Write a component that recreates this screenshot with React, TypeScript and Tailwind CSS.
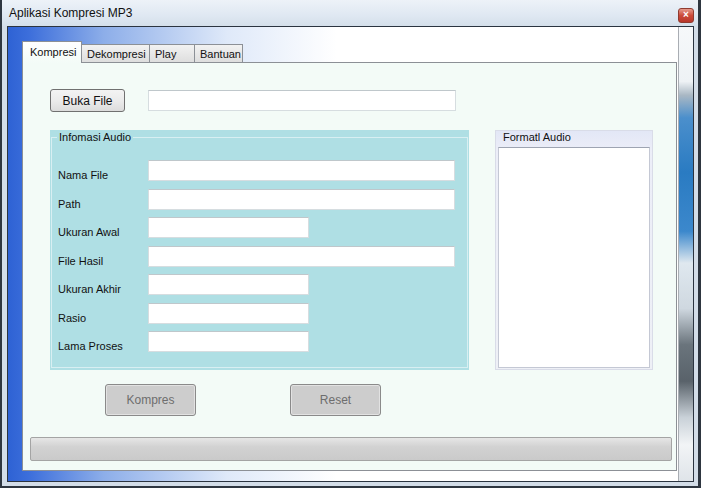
import React from 'react';

const rows = [
  { label: 'Nama File', wide: true },
  { label: 'Path', wide: true },
  { label: 'Ukuran Awal', wide: false },
  { label: 'File Hasil', wide: true },
  { label: 'Ukuran Akhir', wide: false },
  { label: 'Rasio', wide: false },
  { label: 'Lama Proses', wide: false },
];

const tabs = ['Dekompresi', 'Play', 'Bantuan'];
const tabWidths = ['w-[68px]', 'w-[45px]', 'w-[48px]'];

const TextBox = ({ wide }: { wide: boolean }) => (
  <div
    className={`h-[21px] shrink-0 ${wide ? 'w-[307px]' : 'w-[161px]'} bg-white border border-[#d6dde0] border-t-[#bfc7cb]`}
  />
);

const App = () => {
  return (
    <div className="w-[701px] h-[488px] flex flex-col bg-[#d3dde8] border-l-2 border-r-[3px] border-b-2 border-[#2e3640] font-['Liberation_Sans',Arial,sans-serif] text-[#111]">
      {/* Title bar */}
      <div className="h-[26px] flex items-center justify-between pl-[7px] pr-[4px] bg-[linear-gradient(to_bottom,#edf2f8,#dfe8f2_60%,#d4dfea)]">
        <span className="text-[12px] leading-[14px] mt-[-1px]">Aplikasi Kompresi MP3</span>
        <div className="w-[16px] h-[15px] mt-[4px] rounded-[3px] border border-[#8f3b30] bg-[linear-gradient(to_bottom,#e59a8c,#cc4a3a_50%,#b8362a)] flex items-center justify-center text-white text-[10px] font-bold leading-none">
          ×
        </div>
      </div>

      {/* Window body */}
      <div className="flex-1 flex pl-[5px] pr-[4px] pb-[4px]">
        <div className="flex-1 flex border border-[#2b3440] bg-[linear-gradient(to_right,#2e62d4,#3c6edb_3%,#8daee9_14%,#dfe9f9_32%,#ffffff_48%)]">
          {/* left glass strip */}
          <div className="w-[14px]" />

          {/* main column */}
          <div className="w-[655px] flex flex-col pt-[14px] pb-[10px]">
            {/* tab headers */}
            <div className="h-[21px] flex items-end">
              <div className="relative z-10 h-[22px] w-[60px] -mb-px bg-[linear-gradient(to_bottom,#ffffff,#f3fbf7)] border border-b-0 border-[#8c9096] text-[11px] leading-[13px] pl-[7px] pt-[4px]">
                Kompresi
              </div>
              {tabs.map((t, i) => (
                <div
                  key={t}
                  className={`h-[18px] ${tabWidths[i]} bg-[linear-gradient(to_bottom,#f2f2f2,#dedede)] border-t border-r border-[#8c9096] text-[11px] leading-[13px] pt-[3px] pl-[5px]`}
                >
                  {t}
                </div>
              ))}
            </div>

            {/* tab page */}
            <div className="flex-1 flex flex-col bg-[#f3fbf7] border border-[#8c9096]">
              {/* open file row */}
              <div className="mt-[26px] ml-[27px] flex items-center">
                <div className="w-[75px] h-[23px] rounded-[3px] border border-[#707070] bg-[linear-gradient(to_bottom,#f3f3f3,#ebebeb_50%,#dcdcdc)] flex items-center justify-center text-[12px]">
                  Buka File
                </div>
                <div className="ml-[23px] w-[308px] h-[21px] bg-white border border-[#d6dde0] border-t-[#bfc7cb]" />
              </div>

              {/* groups */}
              <div className="mt-[18px] ml-[27px] flex">
                <div className="w-[419px] h-[240px] flex flex-col bg-[#afdfe4] px-[1px] pb-[2px]">
                  <fieldset className="flex-1 border border-[#d8eff2] flex flex-col gap-[7.5px] pt-[15px]">
                    <legend className="ml-[5px] px-[2px] text-[11px] leading-[15px]">Infomasi Audio</legend>
                    {rows.map((r) => (
                      <div key={r.label} className="flex items-start h-[21px]">
                        <span className="w-[96px] shrink-0 pl-[6px] mt-[9px] text-[11px] leading-[13px]">{r.label}</span>
                        <TextBox wide={r.wide} />
                      </div>
                    ))}
                  </fieldset>
                </div>

                <div className="ml-[26px] w-[158px] h-[240px] flex flex-col border border-[#d9dce8] bg-[linear-gradient(to_bottom,#e3e7f6,#eceef8_20px,#eef0f6)]">
                  <div className="h-[16px] pl-[7px] text-[11px] leading-[12px]">Formatl Audio</div>
                  <div className="flex-1 mx-[2px] mb-[1px] bg-white border border-[#c4c8d4] border-t-[#9ea4b2]" />
                </div>
              </div>

              {/* action buttons */}
              <div className="mt-[14px] ml-[82px] flex">
                <div className="w-[91px] h-[32px] rounded-[3px] border border-[#8a8a8a] bg-[#cdcdcd] shadow-[inset_0_0_0_1px_#e2e2e2] flex items-center justify-center text-[12px] text-[#6e6e6e]">
                  Kompres
                </div>
                <div className="ml-[94px] w-[91px] h-[32px] rounded-[3px] border border-[#8a8a8a] bg-[#cdcdcd] shadow-[inset_0_0_0_1px_#e2e2e2] flex items-center justify-center text-[12px] text-[#6e6e6e]">
                  Reset
                </div>
              </div>

              {/* progress bar */}
              <div className="mt-[21px] ml-[7px] w-[642px] h-[24px] rounded-[2px] border border-[#a4a4a4] bg-[linear-gradient(to_bottom,#e6e6e6,#d2d2d2_40%,#cacaca)]" />
            </div>
          </div>

          {/* right glass strip showing the desktop behind */}
          <div className="flex-1 border-l border-[#a9adb3] ml-[1px] bg-[linear-gradient(to_bottom,#f6f8fa,#eef2f5_12%,#aab8c4_15%,#4b8fcc_20%,#2a7bc2_32%,#3c88cc_45%,#dfe8ef_52%,#cfd8e0_62%,#6a747c_70%,#59626a_78%,#c9d1d8_86%,#f2f4f6_92%,#dfe4e9)]" />
        </div>
      </div>
    </div>
  );
};

export default App;
